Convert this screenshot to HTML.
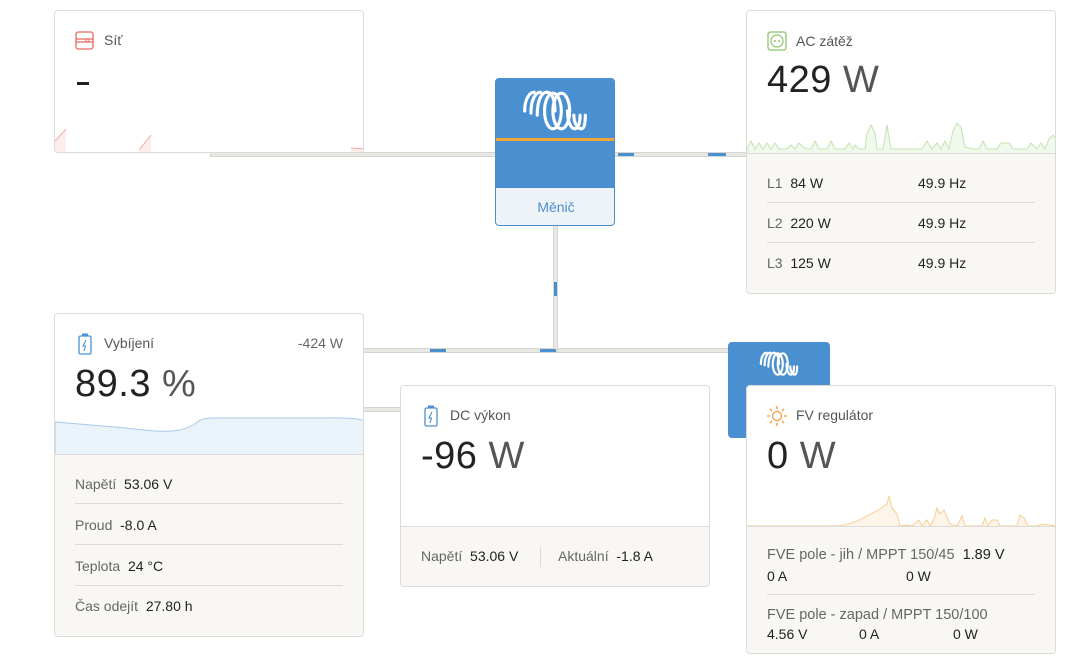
<!DOCTYPE html>
<html><head><meta charset="utf-8"><style>
*{box-sizing:border-box;margin:0;padding:0}
body{width:1084px;height:668px;background:#fff;position:relative;overflow:hidden;font-family:"Liberation Sans","DejaVu Sans",sans-serif;color:#222}
.a{position:absolute}
.card{position:absolute;border:1px solid #dcdbd7;border-radius:4px;background:#fff;overflow:hidden}
.bot{position:absolute;left:0;right:0;bottom:0;background:#f8f7f4;border-top:1px solid #dcdbd7}
.lbl{position:absolute;font-size:14px;color:#555}
.big{position:absolute;font-size:38px;color:#222;letter-spacing:0.5px}
.big span{color:#555}
.row{position:absolute;left:20px;right:20px;font-size:14px;color:#666;height:40px;line-height:40px}
.row b{font-weight:normal;color:#222}
.t{position:absolute;font-size:14px;color:#666;line-height:20px;white-space:nowrap}
.t b{font-weight:normal;color:#222}
.line{position:absolute;background:#e8e7e3;border:1px solid #d6d5d0}
.hl{position:absolute;background:#4a8fd0;height:3px}
</style></head><body>

<div class="line" style="left:210px;top:152px;width:540px;height:5px"></div>
<div class="line" style="left:363px;top:348px;width:370px;height:5px"></div>
<div class="line" style="left:553px;top:224px;width:5px;height:128px"></div>
<div class="line" style="left:363px;top:407px;width:40px;height:5px"></div>
<div class="hl" style="left:618px;top:153px;width:16px"></div>
<div class="hl" style="left:708px;top:153px;width:18px"></div>
<div class="hl" style="left:430px;top:349px;width:16px"></div>
<div class="hl" style="left:540px;top:349px;width:16px"></div>
<div class="hl" style="left:554px;top:282px;width:3px;height:14px"></div>

<div class="card" style="left:54px;top:10px;width:310px;height:143px">
  <svg class="a" style="left:20px;top:20px" width="19" height="19" viewBox="0 0 19 19"><rect x="1" y="1" width="17" height="17" rx="2.5" fill="none" stroke="#e8685e" stroke-width="1.3"/><line x1="1" y1="8" x2="18" y2="8" stroke="#e8685e" stroke-width="1.2"/><line x1="1" y1="11" x2="18" y2="11" stroke="#e8685e" stroke-width="1.2"/><line x1="11" y1="8" x2="11" y2="11" stroke="#e8685e"/><line x1="14" y1="8" x2="14" y2="11" stroke="#e8685e"/></svg>
  <div class="lbl" style="left:49px;top:21px">Síť</div>
  <div class="a" style="left:22px;top:71px;width:12px;height:3px;background:#222"></div>
  <svg class="a" style="left:0;top:100px" width="310" height="43"><path d="M0 30 L11 18 L11 43 L0 43Z" fill="#fdeeee"/><path d="M0 30 L11 18" stroke="#f4a9a6"/><path d="M84 39 L96 24 L96 43 L84 43Z" fill="#fdeeee"/><path d="M84 39 L96 24" stroke="#f4a9a6"/><path d="M296 37 L310 38 L310 43 L296 43Z" fill="#fdeeee"/><path d="M296 37 L310 38" stroke="#f4a9a6"/></svg>
</div>

<div class="a" style="left:495px;top:78px;width:120px;height:148px;border:1px solid #4a8fd0;border-radius:4px;overflow:hidden;background:#4a90d0">
  <svg class="a" style="left:25px;top:9px" width="68" height="46" viewBox="0 0 64 44" fill="none" stroke="#fff" stroke-width="3" stroke-linecap="round"><path d="M3 22 C3 10 8 4 12 4"/><path d="M9 24 C9 10 14 4 18 4"/><path d="M15 26 C15 10 20 4 24 4 C30 4 32 14 32 22"/><ellipse cx="30" cy="22" rx="8" ry="17"/><ellipse cx="38" cy="22" rx="8" ry="17"/><path d="M44 22 C44 34 48 39 51 39 C54 39 56 34 56 26"/><path d="M50 26 C50 34 54 39 57 39 C60 39 61 34 61 26"/></svg>
  <div class="a" style="left:0;top:59px;width:120px;height:3px;background:#f0a73a"></div>
  <div class="a" style="left:0;top:109px;width:120px;height:39px;background:#eef3f8;color:#4a8fd0;font-size:14px;text-align:center;line-height:38px">Měnič</div>
</div>

<div class="card" style="left:746px;top:10px;width:310px;height:284px">
  <svg class="a" style="left:20px;top:20px" width="20" height="20" viewBox="0 0 20 20"><rect x="1" y="1" width="18" height="18" rx="2.5" fill="none" stroke="#8bc56e" stroke-width="1.3"/><circle cx="10" cy="10" r="6" fill="none" stroke="#8bc56e" stroke-width="1.2"/><circle cx="7.8" cy="10" r="1" fill="#8bc56e"/><circle cx="12.2" cy="10" r="1" fill="#8bc56e"/></svg>
  <div class="lbl" style="left:49px;top:22px">AC zátěž</div>
  <div class="big" style="left:20px;top:48px">429 <span>W</span></div>
  <svg class="a" style="left:0;top:108px" width="310" height="35"><path d="M0 30 L4 22 L8 30 L12 24 L16 30 L20 24 L24 30 L28 24 L32 30 L40 30 L44 26 L48 30 L52 24 L56 28 L60 30 L64 30 L68 22 L72 30 L80 30 L84 22 L88 30 L98 30 L102 24 L106 30 L108 26 L112 30 L118 30 L120 14 L124 6 L128 14 L130 30 L136 30 L140 6 L144 30 L150 30 L160 30 L175 30 L180 22 L185 30 L190 24 L194 30 L198 22 L202 30 L206 12 L210 4 L214 8 L218 28 L226 30 L232 30 L236 22 L240 30 L250 30 L254 24 L262 24 L266 30 L280 30 L284 24 L290 30 L294 24 L298 30 L302 20 L306 16 L310 22 L310 35 L0 35Z" fill="#f1f8ec" stroke="#c4e3b3" stroke-width="1"/></svg>
  <div class="bot" style="top:142px">
    <div class="row" style="top:9px;border-bottom:1px solid #dcdbd7">L1 &nbsp;<b>84 W</b><span class="a" style="left:151px"><b>49.9 Hz</b></span></div>
    <div class="row" style="top:49px;border-bottom:1px solid #dcdbd7">L2 &nbsp;<b>220 W</b><span class="a" style="left:151px"><b>49.9 Hz</b></span></div>
    <div class="row" style="top:89px">L3 &nbsp;<b>125 W</b><span class="a" style="left:151px"><b>49.9 Hz</b></span></div>
  </div>
</div>

<div class="card" style="left:54px;top:313px;width:310px;height:324px">
  <svg class="a" style="left:23px;top:19px" width="14" height="22" viewBox="0 0 14 22"><rect x="1" y="3" width="12" height="18" rx="1.5" fill="none" stroke="#4a8fd0" stroke-width="1.3"/><rect x="4" y="0.5" width="6" height="2.5" fill="#4a8fd0"/><path d="M8 7 L5 13 L7.5 13 L6 18" fill="none" stroke="#4a8fd0" stroke-width="1.1"/></svg>
  <div class="lbl" style="left:49px;top:21px">Vybíjení</div>
  <div class="lbl" style="right:20px;top:21px;color:#666">-424 W</div>
  <div class="big" style="left:20px;top:49px">89.3 <span>%</span></div>
  <svg class="a" style="left:0;top:100px" width="310" height="41"><path d="M0 8 L60 13 L100 17 C120 18 130 16 140 10 C145 5 150 4 160 4 L260 4 C280 4 300 3 310 7 L310 41 L0 41Z" fill="#eaf2fa" stroke="#a8c9ea" stroke-width="1"/></svg>
  <div class="bot" style="top:140px">
    <div class="row" style="top:9px;border-bottom:1px solid #dcdbd7">Napětí &nbsp;<b>53.06 V</b></div>
    <div class="row" style="top:50px;border-bottom:1px solid #dcdbd7">Proud &nbsp;<b>-8.0 A</b></div>
    <div class="row" style="top:91px;border-bottom:1px solid #dcdbd7">Teplota &nbsp;<b>24 °C</b></div>
    <div class="row" style="top:131px">Čas odejít &nbsp;<b>27.80 h</b></div>
  </div>
</div>

<div class="card" style="left:400px;top:385px;width:310px;height:202px">
  <svg class="a" style="left:23px;top:19px" width="14" height="22" viewBox="0 0 14 22"><rect x="1" y="3" width="12" height="18" rx="1.5" fill="none" stroke="#4a8fd0" stroke-width="1.3"/><rect x="4" y="0.5" width="6" height="2.5" fill="#4a8fd0"/><path d="M8 7 L5 13 L7.5 13 L6 18" fill="none" stroke="#4a8fd0" stroke-width="1.1"/></svg>
  <div class="lbl" style="left:49px;top:21px">DC výkon</div>
  <div class="big" style="left:20px;top:49px">-96 <span>W</span></div>
  <div class="bot" style="top:140px">
    <div class="row" style="top:9px">Napětí &nbsp;<b>53.06 V</b></div>
    <div class="a" style="left:139px;top:20px;width:1px;height:20px;background:#dcdbd7"></div>
    <div class="row" style="top:9px;left:157px">Aktuální &nbsp;<b>-1.8 A</b></div>
  </div>
</div>

<div class="a" style="left:728px;top:342px;width:102px;height:96px;background:#4a90d0;border-radius:4px">
  <svg class="a" style="left:31px;top:8px" width="40" height="28" viewBox="0 0 64 44" fill="none" stroke="#fff" stroke-width="3.5" stroke-linecap="round"><path d="M3 22 C3 10 8 4 12 4"/><path d="M9 24 C9 10 14 4 18 4"/><path d="M15 26 C15 10 20 4 24 4 C30 4 32 14 32 22"/><ellipse cx="30" cy="22" rx="8" ry="17"/><ellipse cx="38" cy="22" rx="8" ry="17"/><path d="M44 22 C44 34 48 39 51 39 C54 39 56 34 56 26"/><path d="M50 26 C50 34 54 39 57 39 C60 39 61 34 61 26"/></svg>
</div>

<div class="card" style="left:746px;top:385px;width:310px;height:269px">
  <svg class="a" style="left:19px;top:19px" width="22" height="22" viewBox="0 0 22 22" stroke="#f09a3e" stroke-width="1.3" fill="none"><circle cx="11" cy="11" r="4.5"/><path d="M11 1v3M11 18v3M1 11h3M18 11h3M4 4l2 2M16 16l2 2M4 18l2-2M16 6l2-2"/></svg>
  <div class="lbl" style="left:49px;top:21px">FV regulátor</div>
  <div class="big" style="left:20px;top:49px">0 <span>W</span></div>
  <svg class="a" style="left:0;top:100px" width="310" height="42"><path d="M0 40 L90 40 C100 39 110 36 120 30 C125 27 130 26 140 18 L142 10 L145 22 L150 28 L153 40 L160 39 L165 40 L172 34 L175 40 L180 34 L183 40 L187 33 L190 22 L193 28 L197 24 L203 38 L210 40 L215 30 L218 40 L235 40 L238 32 L241 40 L245 34 L250 34 L253 40 L262 40 L270 40 L273 29 L277 32 L281 40 L290 40 L295 38 L310 40 L310 42 L0 42Z" fill="#fdf5e8" stroke="#f6cf95" stroke-width="1"/></svg>
  <div class="bot" style="top:140px">
    <div class="t" style="left:20px;top:18px;font-size:14.5px">FVE pole - jih / MPPT 150/45 &nbsp;<b>1.89 V</b></div>
    <div class="t" style="left:20px;top:39px"><b>0 A</b></div>
    <div class="t" style="left:159px;top:39px"><b>0 W</b></div>
    <div class="a" style="left:20px;right:20px;top:67px;height:1px;background:#dcdbd7"></div>
    <div class="t" style="left:20px;top:78px;font-size:14.5px">FVE pole - zapad / MPPT 150/100</div>
    <div class="t" style="left:20px;top:97px"><b>4.56 V</b></div>
    <div class="t" style="left:112px;top:97px"><b>0 A</b></div>
    <div class="t" style="left:206px;top:97px"><b>0 W</b></div>
  </div>
</div>
</body></html>
